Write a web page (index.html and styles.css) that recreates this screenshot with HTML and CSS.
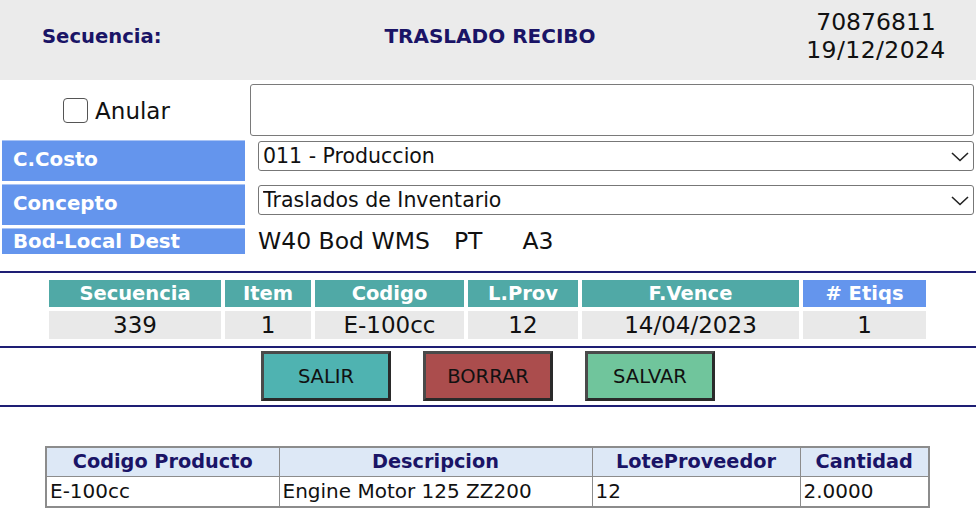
FILE: index.html
```html
<!DOCTYPE html>
<html lang="es">
<head>
<meta charset="utf-8">
<title>Traslado Recibo</title>
<link rel="stylesheet" href="styles.css">
</head>
<body>
<header class="topbar">
  <div class="topbar-label">Secuencia:</div>
  <div class="topbar-title">TRASLADO RECIBO</div>
  <div class="topbar-meta">
    <div>70876811</div>
    <div>19/12/2024</div>
  </div>
</header>

<section class="form">
  <label class="annul">
    <input type="checkbox" class="check">
    <span>Anular</span>
  </label>
  <div class="field-cell"><input type="text" class="text-input"></div>

  <div class="form-label">C.Costo</div>
  <div class="select-cell">
    <div class="select-wrap">
      <select class="select"><option>011 - Produccion</option></select>
      <svg class="chevron" width="18" height="10" viewBox="0 0 18 10"><path d="M1 1 L9 8.5 L17 1" fill="none" stroke="#222" stroke-width="1.6"/></svg>
    </div>
  </div>

  <div class="form-label">Concepto</div>
  <div class="select-cell">
    <div class="select-wrap">
      <select class="select"><option>Traslados de Inventario</option></select>
      <svg class="chevron" width="18" height="10" viewBox="0 0 18 10"><path d="M1 1 L9 8.5 L17 1" fill="none" stroke="#222" stroke-width="1.6"/></svg>
    </div>
  </div>

  <div class="form-label form-label-short">Bod-Local Dest</div>
  <div class="dest">
    <span>W40 Bod WMS</span><span class="dest-pt">PT</span><span class="dest-a3">A3</span>
  </div>
</section>

<section class="detail">
  <table class="detail-table">
    <thead>
      <tr>
        <th class="w-sec">Secuencia</th>
        <th class="w-item">Item</th>
        <th class="w-cod">Codigo</th>
        <th class="w-lprov">L.Prov</th>
        <th class="w-fv">F.Vence</th>
        <th class="w-et th-blue"># Etiqs</th>
      </tr>
    </thead>
    <tbody>
      <tr>
        <td>339</td>
        <td>1</td>
        <td>E-100cc</td>
        <td>12</td>
        <td>14/04/2023</td>
        <td>1</td>
      </tr>
    </tbody>
  </table>
</section>

<section class="actions">
  <button class="btn btn-salir">SALIR</button>
  <button class="btn btn-borrar">BORRAR</button>
  <button class="btn btn-salvar">SALVAR</button>
</section>

<section class="lines">
  <table class="lines-table">
    <thead>
      <tr>
        <th class="c1">Codigo Producto</th>
        <th class="c2">Descripcion</th>
        <th class="c3">LoteProveedor</th>
        <th class="c4">Cantidad</th>
      </tr>
    </thead>
    <tbody>
      <tr>
        <td>E-100cc</td>
        <td>Engine Motor 125 ZZ200</td>
        <td>12</td>
        <td>2.0000</td>
      </tr>
    </tbody>
  </table>
</section>
</body>
</html>
```

FILE: styles.css
```css
* { box-sizing: border-box; }

body {
  margin: 0;
  width: 976px;
  font-family: "DejaVu Sans", Verdana, sans-serif;
  color: #111;
  background: #fff;
}

/* ---- top bar ---- */
.topbar {
  display: grid;
  grid-template-columns: 250px 480px 1fr;
  align-items: center;
  height: 80px;
  padding-bottom: 8px;
  background: #ebebeb;
}
.topbar-label {
  padding-left: 42px;
  font-weight: bold;
  font-size: 19.6px;
  color: #1a1466;
}
.topbar-title {
  text-align: center;
  font-weight: bold;
  font-size: 20px;
  color: #1a1466;
}
.topbar-meta {
  padding-left: 46px;
  text-align: center;
  font-size: 23.5px;
  line-height: 28px;
  color: #111;
}
.topbar-meta div + div {
  letter-spacing: 0.4px;
}

/* ---- header form ---- */
.form {
  display: grid;
  grid-template-columns: 243px 1fr;
  grid-template-rows: 57px 41px 41px 26px;
  column-gap: 5px;
  row-gap: 3px;
  margin-left: 2px;
  margin-right: 2px;
}
.annul {
  display: flex;
  align-items: center;
  justify-content: center;
  gap: 7px;
  padding-right: 14px;
  padding-top: 4px;
  font-size: 23px;
}
.check {
  appearance: none;
  margin: 0;
  width: 25px;
  height: 25px;
  border: 1.5px solid #555;
  border-radius: 4px;
  background: #fff;
}
.field-cell {
  padding-top: 4px;
}
.text-input {
  display: block;
  width: 100%;
  height: 52px;
  border: 1.5px solid #7a7a7a;
  border-radius: 3px;
  background: #fff;
}
.form-label {
  display: flex;
  align-items: center;
  padding-left: 11px;
  padding-bottom: 4px;
  background: #6495ed;
  border-top: 1px solid #a9c4f5;
  color: #fff;
  font-weight: bold;
  font-size: 19.8px;
}
.form-label-short {
  padding-bottom: 0;
}
.select-cell {
  padding-left: 8px;
  padding-top: 1px;
}
.select-wrap {
  position: relative;
}
.select {
  appearance: none;
  display: block;
  width: 100%;
  height: 30px;
  padding: 0 0 0 4px;
  border: 1.5px solid #777;
  border-radius: 3px;
  background: #fff;
  font-family: "DejaVu Sans", Verdana, sans-serif;
  font-size: 20.5px;
  color: #111;
}
.chevron {
  position: absolute;
  right: 5px;
  top: 11px;
  pointer-events: none;
}
.dest {
  display: flex;
  align-items: center;
  padding-left: 8px;
  font-size: 23.5px;
  white-space: pre;
}
.dest-pt { margin-left: 24px; }
.dest-a3 { margin-left: 40px; }

/* ---- detail grid ---- */
.detail {
  margin-top: 17px;
  border-top: 2px solid #1e1e74;
  border-bottom: 2px solid #1e1e74;
  padding: 3px 0 3px 45px;
}
.detail-table {
  border-spacing: 4px;
}
.detail-table th {
  height: 27px;
  padding: 0;
  background: #50a9a6;
  color: #fff;
  font-weight: bold;
  font-size: 19.5px;
  line-height: 27px;
  text-align: center;
}
.detail-table th.th-blue { background: #6495ed; }
.detail-table td {
  height: 28px;
  padding: 0;
  background: #e9e9e9;
  font-size: 23px;
  line-height: 28px;
  text-align: center;
}
.w-sec { width: 172px; }
.w-item { width: 86px; }
.w-cod { width: 149px; }
.w-lprov { width: 110px; }
.w-fv { width: 217px; }
.w-et { width: 123px; }

/* ---- buttons ---- */
.actions {
  display: flex;
  justify-content: center;
  gap: 32px;
  padding: 3px 0 4px 0;
  border-bottom: 2px solid #1e1e74;
}
.btn {
  width: 130px;
  height: 50px;
  border: 3px solid #2a2a2a;
  border-top-color: #4a4a4a;
  border-left-color: #4a4a4a;
  font-family: "DejaVu Sans", Verdana, sans-serif;
  font-size: 19.5px;
  color: #111;
  padding: 0;
}
.btn-salir { background: #4fb3b1; }
.btn-borrar { background: #ab4d4d; }
.btn-salvar { background: #70c59c; }

/* ---- lines table ---- */
.lines {
  padding: 39px 0 0 45px;
}
.lines-table {
  border-collapse: collapse;
  border: 2px solid #8c8c8c;
}
.lines-table th,
.lines-table td {
  border: 1.5px solid #8c8c8c;
  padding: 0 3px;
}
.lines-table th {
  height: 29px;
  background: #dde8f6;
  color: #1a1466;
  font-weight: bold;
  font-size: 19.3px;
  text-align: center;
}
.lines-table td {
  height: 31px;
  font-size: 20px;
  text-align: left;
}
.c1 { width: 233px; }
.c2 { width: 313px; }
.c3 { width: 208px; }
.c4 { width: 129px; }
```
